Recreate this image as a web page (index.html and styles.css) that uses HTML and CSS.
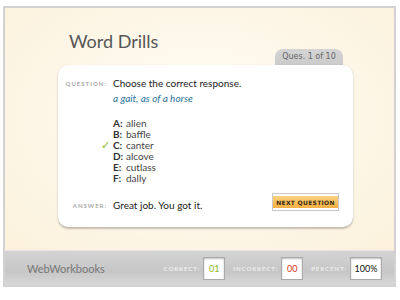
FILE: index.html
```html
<!DOCTYPE html>
<html>
<head>
    <meta charset="UTF-8">
    <title>Word Drills</title>
    <link rel="stylesheet" href="styles.css">
</head>
<body>
    <div class="frame">
        <div class="stage">
            <h1 class="title">Word Drills</h1>
            <div class="tab">Ques. 1 of 10</div>
            <div class="card">
                <div class="row">
                    <span class="label">Question:</span>
                    <span class="text">Choose the correct response.</span>
                </div>
                <div class="row">
                    <span class="label"></span>
                    <span class="prompt">a gait, as of a horse</span>
                </div>
                <ul class="options">
                    <li><span class="mark"></span><b>A:</b> alien</li>
                    <li><span class="mark"></span><b>B:</b> baffle</li>
                    <li><span class="mark">&#10003;</span><b>C:</b> canter</li>
                    <li><span class="mark"></span><b>D:</b> alcove</li>
                    <li><span class="mark"></span><b>E:</b> cutlass</li>
                    <li><span class="mark"></span><b>F:</b> dally</li>
                </ul>
                <div class="row answer">
                    <span class="label">Answer:</span>
                    <span class="text">Great job. You got it.</span>
                    <button class="next">Next Question</button>
                </div>
            </div>
        </div>
        <div class="footer">
            <div class="brand">WebWorkbooks</div>
            <div class="scores">
                <span class="score_label">Correct:</span>
                <span class="score_box good">01</span>
                <span class="score_label">Incorrect:</span>
                <span class="score_box bad">00</span>
                <span class="score_label">Percent:</span>
                <span class="score_box wide">100%</span>
            </div>
        </div>
    </div>
</body>
</html>
```

FILE: styles.css
```css
body{
    margin:0;
    background:#fff;
    font-family:Lato, "Open Sans", sans-serif;
}
.frame{
    margin:6px 4px 0 3px;
    height:277px;
    border:2px solid #d2d2d2;
    display:flex;
    flex-direction:column;
}
.stage{
    flex:1;
    background:radial-gradient(ellipse at 50% 45%, #fffcf4 0%, #fdf5e4 70%, #fbf1dc 100%);
    padding:22px 0 0 53px;
    display:flex;
    flex-direction:column;
    align-items:flex-start;
}
.title{
    margin:0 0 0 11px;
    font-weight:normal;
    font-size:18px;
    line-height:22px;
    color:#555;
}
.tab{
    align-self:flex-end;
    margin:-3px 51px 0 0;
    width:68px;
    height:20px;
    line-height:16px;
    border-radius:8px 8px 0 0;
    background:linear-gradient(#d4d4d4, #c9c9c9);
    color:#666;
    font-family:"DejaVu Sans", sans-serif;
    font-size:8px;
    text-align:center;
}
.card{
    margin-top:-4px;
    width:295px;
    height:162px;
    box-sizing:border-box;
    background:#fff;
    border-radius:10px;
    box-shadow:0 2px 2px rgba(0,0,0,.22), 0 0 1px rgba(0,0,0,.12);
    padding:11px 14px 0 0;
    font-size:10px;
    color:#222;
}
.row{
    display:flex;
    align-items:center;
    height:14px;
}
.label{
    width:49px;
    margin-right:6px;
    text-align:right;
    text-transform:uppercase;
    font-size:6px;
    letter-spacing:1px;
    color:#aaa;
    font-weight:bold;
}
.prompt{
    margin-top:2px;
    font-style:italic;
    color:#2a72a0;
}
.options{
    list-style:none;
    margin:13px 0 0 0;
    padding:0;
}
.options li{
    display:flex;
    align-items:center;
    height:11px;
    color:#444;
}
.options b{
    width:13px;
    color:#333;
}
.mark{
    width:55px;
    padding-right:3px;
    box-sizing:border-box;
    text-align:right;
    color:#8cb820;
    font-size:11px;
}
.answer{
    margin-top:15px;
}
.next{
    margin-left:auto;
    margin-top:-6px;
    width:67px;
    height:18px;
    border:1px solid #c8c8c8;
    padding:2px 0;
    background:#f4f4f4;
    background-clip:content-box;
    background-image:linear-gradient(#fdd88a, #f5aa3a);
    font-family:"DejaVu Sans", sans-serif;
    font-weight:bold;
    font-size:6px;
    letter-spacing:.3px;
    white-space:nowrap;
    text-transform:uppercase;
    color:#3a2a10;
}
.footer{
    height:34px;
    background:linear-gradient(#d4d4d4, #c6c6c6 60%, #d8d8d8);
    border-top:1px solid #e6e6e6;
    display:flex;
    align-items:center;
    justify-content:space-between;
    padding:0 12px 0 22px;
}
.brand{
    font-size:11px;
    color:#777;
}
.scores{
    display:flex;
    align-items:center;
}
.score_label{
    font-size:6px;
    font-weight:bold;
    letter-spacing:1px;
    text-transform:uppercase;
    color:#eee;
    margin:0 3px 0 8px;
}
.score_box{
    width:20px;
    height:21px;
    line-height:21px;
    text-align:center;
    background:#fff;
    border:1px solid #aaa;
    box-shadow:inset 0 1px 2px rgba(0,0,0,.25);
    font-size:9px;
}
.good{ color:#8cb820; }
.bad{ color:#d83a1a; }
.wide{ width:30px; color:#111; }
```
